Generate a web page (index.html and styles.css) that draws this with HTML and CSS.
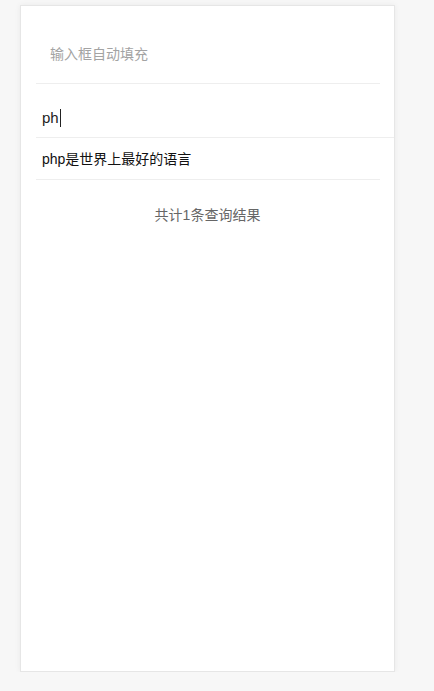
FILE: index.html
```html
<!DOCTYPE html>
<html lang="zh-CN">
<head>
    <meta charset="UTF-8">
    <meta name="viewport" content="width=device-width, initial-scale=1.0">
    <title>输入框自动填充</title>
    <link rel="stylesheet" href="styles.css">
</head>
<body>
    <div class="page">
        <div class="title">输入框自动填充</div>

        <div class="search-input">ph<span class="caret"></span></div>

        <ul class="suggest-list">
            <li>php是世界上最好的语言</li>
        </ul>

        <div class="result-count">共计1条查询结果</div>
    </div>
</body>
</html>
```

FILE: styles.css
```css
body {
    margin: 0;
    padding: 0;
    background-color: #f7f7f7;
    font-family: "Liberation Sans", "Noto Sans CJK SC", sans-serif;
    font-size: 14px;
}
.page {
    margin: 5px 0 0 20px;
    width: 375px;
    height: 667px;
    box-sizing: border-box;
    background-color: #fff;
    border: 1px solid #e6e6e6;
    box-shadow: 0 0 6px rgba(0, 0, 0, 0.06);
    padding-left: 15px;
}
.title {
    color: #a3a3a3;
    line-height: 20px;
    padding: 38px 0 19px 14px;
    margin-right: 14px;
    border-bottom: 1px solid #eee;
}
.search-input {
    color: #222;
    font-size: 15px;
    line-height: 20px;
    padding: 24px 0 9px 6px;
    border-bottom: 1px solid #eee;
}
.caret {
    display: inline-block;
    width: 1px;
    height: 18px;
    background-color: #222;
    vertical-align: -4px;
    margin-left: 1px;
}
.suggest-list {
    list-style: none;
    margin: 0 14px 0 0;
    padding: 0;
}
.suggest-list li {
    color: #111;
    line-height: 20px;
    padding: 11px 0 10px 6px;
    border-bottom: 1px solid #eee;
}
.result-count {
    color: #666;
    text-align: center;
    line-height: 20px;
    padding-top: 25px;
    margin-left: -15px;
}
```
